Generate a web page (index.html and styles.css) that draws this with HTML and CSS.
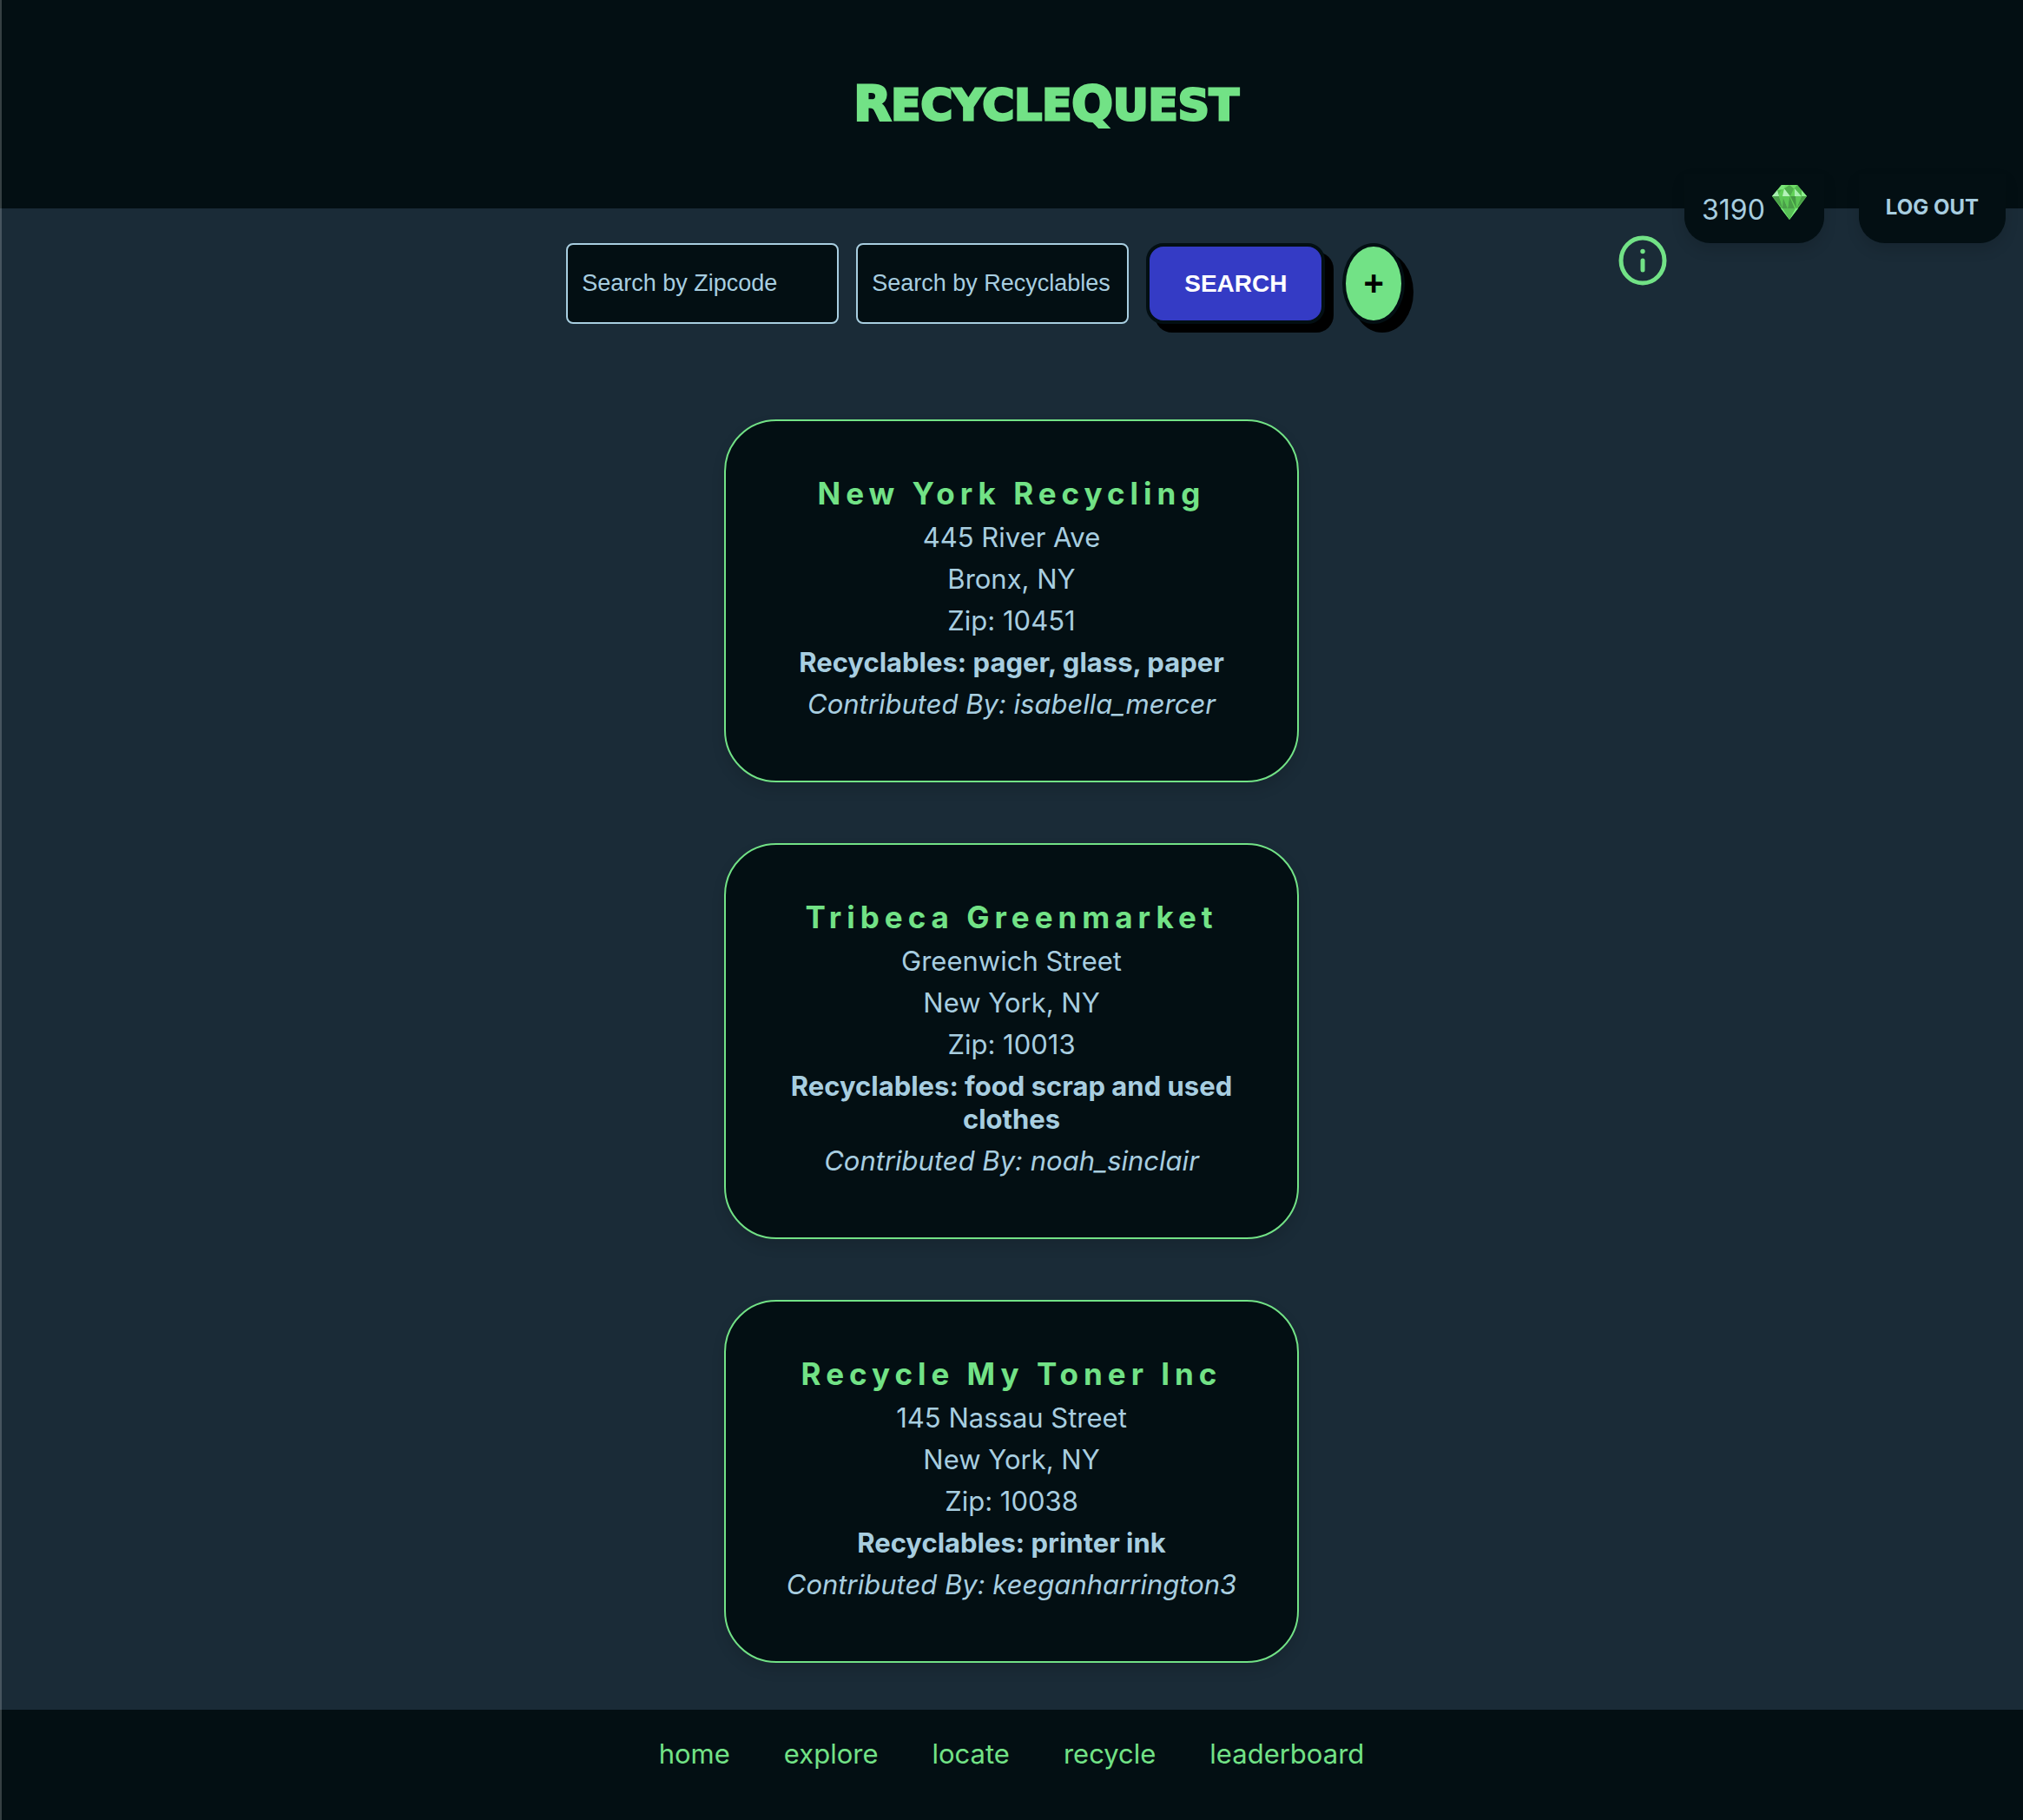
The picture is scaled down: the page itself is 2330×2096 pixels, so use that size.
FILE: index.html
```
<!DOCTYPE html>
<html lang="en">
<head>
  <meta charset="utf-8">
  <meta name="viewport" content="width=device-width, initial-scale=1">
  <title>RecycleQuest</title>
  <link rel="stylesheet" href="styles.css">
</head>
<body>
  <header class="site-header">
    <h1 class="brand"><span class="brand-initial">R</span>ecycle<span class="brand-initial">Q</span>uest</h1>
    <div class="account">
      <button class="info-button" type="button" aria-label="Information">
        <svg class="info-icon" viewBox="0 0 56 58" aria-hidden="true">
          <ellipse cx="28" cy="29" rx="25" ry="26" fill="none" stroke="currentColor" stroke-width="5"/>
          <circle cx="28" cy="18.500" r="2.700" fill="currentColor"/>
          <path d="M28 29v11" stroke="currentColor" stroke-width="5" stroke-linecap="round"/>
        </svg>
      </button>
      <p class="points">3190
        <svg class="gem" viewBox="0 0 40 40" aria-hidden="true">
          <path fill="#62d158" d="M11 0h18l11 13-20 27L0 13z"/>
          <path fill="#52b94f" d="M11 0h4L6 13H0z"/>
          <path fill="#a8efb0" d="M6 6l2 7H0z"/>
          <path fill="#7ce67b" d="M11 0h5l-3 5-7 1z"/>
          <path fill="#b5f2ba" d="M14 4l7 9h-9z"/>
          <path fill="#4fae4c" d="M14 4l6-4 5 4-4 9z"/>
          <path fill="#6fdc68" d="M14 4l1-4h5zM25 4l-5-4h9z"/>
          <path fill="#a8efb0" d="M26 4l8 9h-8z"/>
          <path fill="#52b94f" d="M29 0l5 6v7l-8-9z"/>
          <path fill="#8af08b" d="M34 6l6 7h-6z"/>
          <path fill="#4a9f49" d="M0 13h8l4 14zM12 13l6 14h-6l-3-8zM20 13l6 14h-8zM34 13h6L28 27z"/>
          <path fill="#5cc756" d="M8 13h5l-1 14zM12 13h8l-2 14zM27 13h7l-6 14z"/>
          <path fill="#459845" d="M21 13h6l1 14z"/>
          <path fill="#7cf080" d="M10 27h4l6 13z"/>
          <path fill="#58c056" d="M12 27h15l-7 13z"/>
          <path fill="#7cf080" d="M27 27h3L20 40z"/>
        </svg>
      </p>
      <button class="logout" type="button">LOG OUT</button>
    </div>
  </header>

  <main class="content">
    <form class="search">
      <input class="search-field" type="text" placeholder="Search by Zipcode" aria-label="Search by Zipcode">
      <input class="search-field" type="text" placeholder="Search by Recyclables" aria-label="Search by Recyclables">
      <button class="search-button" type="submit">SEARCH</button>
      <button class="add-button" type="button" aria-label="Add a location">+</button>
    </form>

    <section class="locations" aria-label="Recycling locations">
      <article class="card">
        <h2 class="card-title">New York Recycling</h2>
        <p>445 River Ave</p>
        <p>Bronx, NY</p>
        <p>Zip: 10451</p>
        <p class="materials">Recyclables: pager, glass, paper</p>
        <p class="contributor">Contributed By: isabella_mercer</p>
      </article>
      <article class="card">
        <h2 class="card-title">Tribeca Greenmarket</h2>
        <p>Greenwich Street</p>
        <p>New York, NY</p>
        <p>Zip: 10013</p>
        <p class="materials">Recyclables: food scrap and used clothes</p>
        <p class="contributor">Contributed By: noah_sinclair</p>
      </article>
      <article class="card">
        <h2 class="card-title">Recycle My Toner Inc</h2>
        <p>145 Nassau Street</p>
        <p>New York, NY</p>
        <p>Zip: 10038</p>
        <p class="materials">Recyclables: printer ink</p>
        <p class="contributor">Contributed By: keeganharrington3</p>
      </article>
    </section>
  </main>

  <footer class="site-footer">
    <nav class="footer-nav" aria-label="Main">
      <a href="#home">home</a>
      <a href="#explore">explore</a>
      <a href="#locate">locate</a>
      <a href="#recycle">recycle</a>
      <a href="#leaderboard">leaderboard</a>
    </nav>
  </footer>
</body>
</html>
```
FILE: styles.css
```
:root {
  --ink: #030f13;
  --slate: #1a2b37;
  --green: #72e286;
  --sky: #a8cee0;
  --blue: #343bc5;
}

* {
  box-sizing: border-box;
}

body {
  margin: 0;
  min-height: 100vh;
  display: flex;
  flex-direction: column;
  background: var(--slate);
  color: var(--sky);
  font-family: Inter, "Liberation Sans", sans-serif;
  font-size: 31px;
  line-height: 38px;
}

/* Thin light edge down the left of the window */
body::before {
  content: "";
  position: fixed;
  inset: 0 auto 0 0;
  z-index: 2;
  width: 2px;
  background: rgba(255, 255, 255, 0.2);
}

h1,
h2,
p {
  margin: 0;
}

button,
input {
  font-family: "Liberation Sans", Arial, sans-serif;
}

button {
  cursor: pointer;
}

/* Header */
.site-header {
  position: relative;
  display: flex;
  align-items: center;
  justify-content: center;
  height: 240px;
  padding-left: 80px;
  background: var(--ink);
}

.brand {
  color: var(--green);
  font-family: "DejaVu Sans", sans-serif;
  font-size: 50px;
  font-weight: 700;
  line-height: 64px;
  text-transform: uppercase;
  -webkit-text-stroke: 3px var(--green);
}

.brand-initial {
  font-size: 56px;
}

.account {
  position: absolute;
  top: 200px;
  right: 20px;
  display: flex;
  align-items: flex-start;
}

.info-button {
  display: flex;
  margin: 71px 20px 0 0;
  padding: 0;
  border: 0;
  background: none;
  color: var(--green);
}

.info-icon {
  width: 56px;
  height: 58px;
}

.points,
.logout {
  height: 80px;
  border-radius: 0 0 30px 30px;
  background: var(--ink);
  box-shadow: 0 8px 16px rgba(0, 0, 0, 0.12);
}

.points {
  display: flex;
  gap: 8px;
  margin-right: 40px;
  padding: 23px 20px 0;
  font-size: 32px;
}

.gem {
  width: 40px;
  height: 40px;
  margin-top: -10px;
}

.logout {
  padding: 0 31px 4px;
  border: 0;
  color: var(--sky);
  font-family: inherit;
  font-size: 24px;
  font-weight: 700;
}

/* Search */
.content {
  flex: 1;
  padding: 40px 20px 54px;
}

.search {
  display: flex;
  flex-wrap: wrap;
  justify-content: center;
  gap: 20px;
  padding-right: 60px;
}

.search-field {
  width: 314px;
  padding: 0 16px;
  border: 2px solid var(--sky);
  border-radius: 8px;
  background: var(--ink);
  color: var(--sky);
  font-size: 27px;
}

.search-field::placeholder {
  color: var(--sky);
  opacity: 1;
}

.search-button,
.add-button {
  border: 4px solid var(--ink);
  font-weight: 700;
  box-shadow: 10px 10px 0 #000;
}

.search-button {
  padding: 0 40px;
  border-radius: 20px;
  background: var(--blue);
  color: #fff;
  font-size: 28px;
}

.add-button {
  padding: 20px;
  border-radius: 50%;
  background: var(--green);
  color: #000;
  font-size: 40px;
  line-height: 45px;
}

/* Location cards */
.locations {
  display: flex;
  flex-direction: column;
  align-items: center;
  gap: 70px;
  margin-top: 110px;
}

.card {
  display: flex;
  flex-direction: column;
  gap: 10px;
  width: 100%;
  max-width: 662px;
  padding: 62px 60px 69px;
  border: 2px solid var(--green);
  border-radius: 60px;
  background: var(--ink);
  box-shadow: 0 8px 16px rgba(0, 0, 0, 0.12);
  text-align: center;
}

.card-title {
  color: var(--green);
  font-size: 35px;
  font-weight: 700;
  line-height: 43px;
  letter-spacing: 6px;
}

.materials {
  font-weight: 700;
}

.contributor {
  font-style: italic;
}

/* Footer */
.site-footer {
  padding: 32px 20px 60px;
  background: var(--ink);
}

.footer-nav {
  display: flex;
  flex-wrap: wrap;
  justify-content: center;
  gap: 62px;
}

.footer-nav a {
  color: var(--green);
  text-decoration: none;
}
```
